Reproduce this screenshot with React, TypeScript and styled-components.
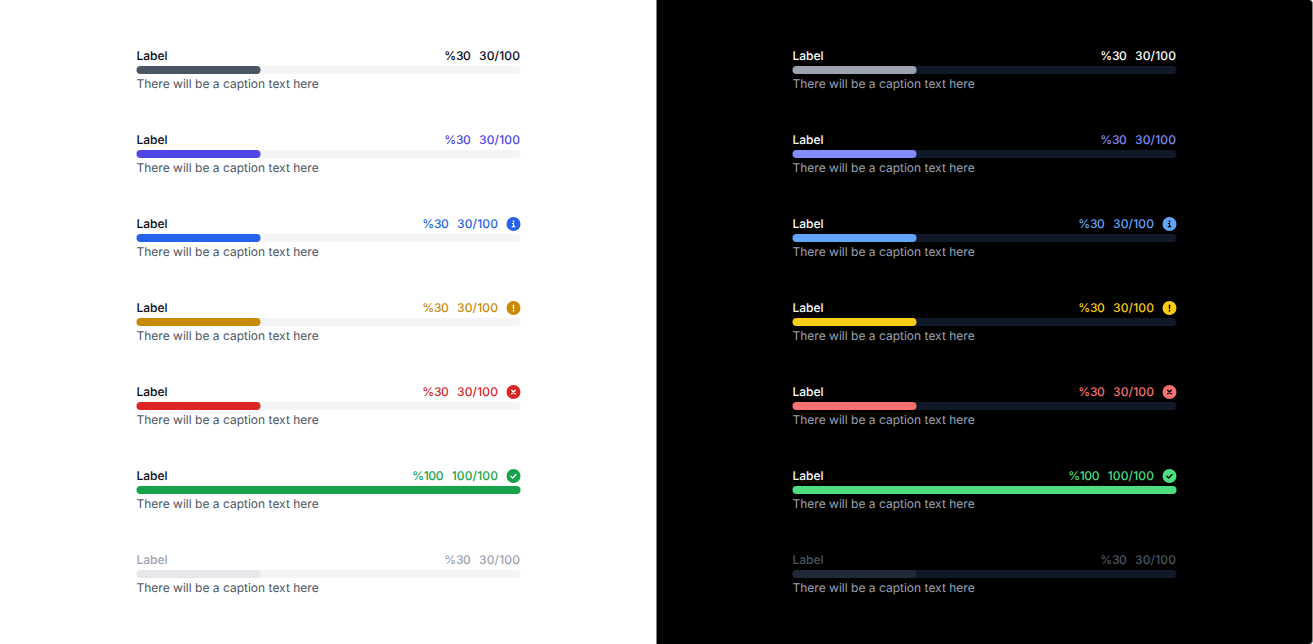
import React from "react";
import styled, { createGlobalStyle } from "styled-components";

const Global = createGlobalStyle`
  body { margin: 0; background: #fff; font-family: Inter, sans-serif; text-rendering: geometricPrecision; }
`;
const Page = styled.main`
  display: flex; width: 1313px; height: 644px; overflow: hidden;
`;
const Panel = styled.section<{ $dark?: boolean }>`
  box-sizing: border-box;
  flex: none;
  width: ${p => (p.$dark ? 657 : 656)}px;
  padding: 46px 0 0 ${p => (p.$dark ? 135 : 136)}px;
  display: flex; flex-direction: column; gap: 36px;
  background: ${p => (p.$dark ? "#000" : "#fff")};
  border: solid #808080;
  border-width: ${p => (p.$dark ? "0 1px" : "0")};
  border-radius: ${p => (p.$dark ? "0 4px 4px 0" : "0")};
`;
const Item = styled.div`
  display: flex; flex-direction: column; height: 48px; width: 385px;
`;
const Head = styled.div`
  display: flex; justify-content: space-between; height: 20px; align-items: center;
  font-size: 12px; line-height: 20px; font-weight: 500;
`;
const Label = styled.span<{ $color: string }>`
  padding-left: 0.5px;
  color: ${p => p.$color};
`;
const Values = styled.div<{ $color: string; $icon: boolean }>`
  display: flex; align-items: center; color: ${p => p.$color};
  padding-right: ${p => (p.$icon ? 0 : 1)}px;
`;
const Percent = styled.span`
  margin-right: 8.6px; letter-spacing: -0.35px;
`;
const Count = styled.span`
  letter-spacing: 0.12px;
`;
const Bar = styled.svg`
  display: block; width: 385px; height: 8px;
`;
const Caption = styled.div<{ $color: string }>`
  padding-left: 0.5px;
  font-size: 12px; line-height: 20px; letter-spacing: 0.01px; color: ${p => p.$color};
`;
const Icon = styled.svg`
  display: block; width: 15px; height: 14px; margin-left: 8px;
`;

type Kind = "info" | "warn" | "error" | "ok";
const Mark = ({ kind, ink }: { kind: Kind; ink: string }) => (
  <Icon viewBox="-0.5 0 15 14" fill="none" stroke={ink} strokeLinecap="round" strokeLinejoin="round">
    <circle cx="7" cy="7" r="7" fill="currentColor" stroke="none" />
    {kind === "info" && <><circle cx="7" cy="4.4" r="0.9" fill={ink} stroke="none" /><path d="M5.9 6.5H7.1V9.6M5.7 9.7H8.3" strokeWidth="1.2" /></>}
    {kind === "warn" && <><path d="M7 4.2V7.4" strokeWidth="1.3" /><circle cx="7" cy="9.7" r="0.85" fill={ink} stroke="none" /></>}
    {kind === "error" && <path d="M5.25 5.25L8.75 8.75M8.75 5.25L5.25 8.75" strokeWidth="1.5" />}
    {kind === "ok" && <path d="M4.4 7.2L6.2 8.9L9.5 5.6" strokeWidth="1.4" />}
  </Icon>
);

const rows: { light: string; dark: string; text?: [string, string]; kind?: Kind; value: number; disabled?: boolean }[] = [
  { light: "#4b5563", dark: "#9ca3af", text: ["#030712", "#fff"], value: 30 },
  { light: "#4f46e5", dark: "#818cf8", value: 30 },
  { light: "#2563eb", dark: "#60a5fa", kind: "info", value: 30 },
  { light: "#ca8a04", dark: "#facc15", kind: "warn", value: 30 },
  { light: "#dc2626", dark: "#f87171", kind: "error", value: 30 },
  { light: "#16a34a", dark: "#4ade80", kind: "ok", value: 100 },
  { light: "#e5e7eb", dark: "#1f2937", text: ["#9ca3af", "#4b5563"], value: 30, disabled: true },
];

const Column = ({ dark = false }: { dark?: boolean }) => (
  <Panel $dark={dark}>
    {rows.map((r, i) => {
      const color = dark ? r.dark : r.light;
      const text = r.text ? r.text[dark ? 1 : 0] : color;
      return (
        <Item key={i}>
          <Head>
            <Label $color={r.disabled ? text : dark ? "#fff" : "#030712"}>Label</Label>
            <Values $color={text} $icon={!!r.kind}>
              <Percent>%{r.value}</Percent>
              <Count>{r.value}/100</Count>
              {r.kind && <Mark kind={r.kind} ink={dark ? "#000" : "#fff"} />}
            </Values>
          </Head>
          <Bar viewBox="0 0 385 8">
            <rect x="0.5" width="384" height="8" rx="4" fill={dark ? "#111827" : "#f3f4f6"} />
            <rect x="0.5" width={r.value === 100 ? 384 : 124} height="8" rx="4" fill={color} />
          </Bar>
          <Caption $color={dark ? "#9ca3af" : "#4b5563"}>There will be a caption text here</Caption>
        </Item>
      );
    })}
  </Panel>
);

export default function App() {
  return <><Global /><Page><Column /><Column dark /></Page></>;
}
